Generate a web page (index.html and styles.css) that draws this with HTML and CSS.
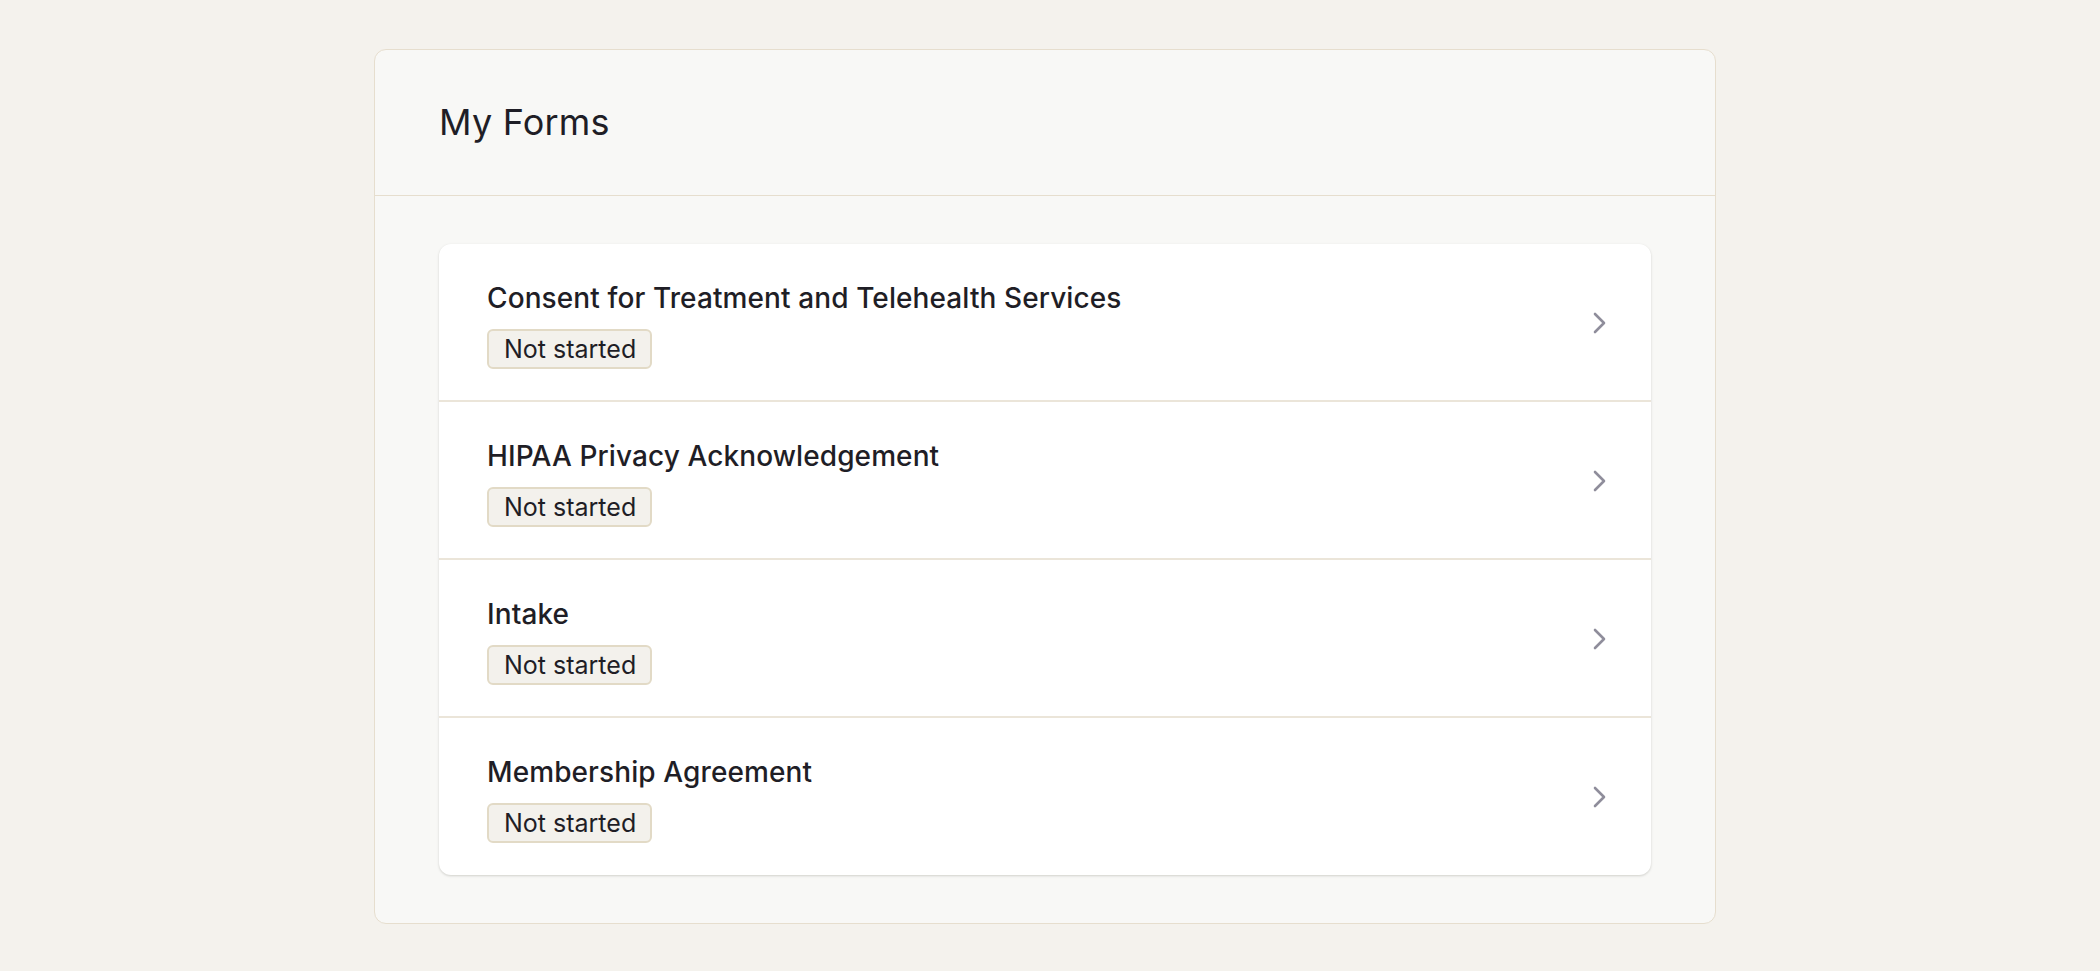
FILE: index.html
```html
<!DOCTYPE html>
<html lang="en">
<head>
<meta charset="utf-8">
<title>My Forms</title>
<link rel="stylesheet" href="styles.css">
</head>
<body>
<main class="page">
  <section class="forms-card">
    <header class="forms-header">
      <h1 class="forms-title">My Forms</h1>
    </header>
    <div class="forms-body">
      <ul class="form-list">
        <li class="form-row">
          <div class="form-info">
            <span class="form-name">Consent for Treatment and Telehealth Services</span>
            <span class="status-badge">Not started</span>
          </div>
          <svg class="chevron" viewBox="0 0 14 24" width="14" height="24" aria-hidden="true"><polyline points="3,3 12,12 3,21"/></svg>
        </li>
        <li class="form-row">
          <div class="form-info">
            <span class="form-name">HIPAA Privacy Acknowledgement</span>
            <span class="status-badge">Not started</span>
          </div>
          <svg class="chevron" viewBox="0 0 14 24" width="14" height="24" aria-hidden="true"><polyline points="3,3 12,12 3,21"/></svg>
        </li>
        <li class="form-row">
          <div class="form-info">
            <span class="form-name">Intake</span>
            <span class="status-badge">Not started</span>
          </div>
          <svg class="chevron" viewBox="0 0 14 24" width="14" height="24" aria-hidden="true"><polyline points="3,3 12,12 3,21"/></svg>
        </li>
        <li class="form-row">
          <div class="form-info">
            <span class="form-name">Membership Agreement</span>
            <span class="status-badge">Not started</span>
          </div>
          <svg class="chevron" viewBox="0 0 14 24" width="14" height="24" aria-hidden="true"><polyline points="3,3 12,12 3,21"/></svg>
        </li>
      </ul>
    </div>
  </section>
</main>
</body>
</html>
```
FILE: styles.css
```css
* { box-sizing: border-box; }

html, body {
  margin: 0;
  padding: 0;
  background: #f4f2ed;
  color: #1f1e26;
  font-family: Inter, "Noto Sans", sans-serif;
}

.page {
  padding: 49px 10px 48px 0;
}

.forms-card {
  width: 1342px;
  margin: 0 auto;
  background: #f8f8f6;
  border: 1px solid #e6dece;
  border-radius: 12px;
}

.forms-header {
  height: 146px;
  display: flex;
  align-items: center;
  padding: 0 64px 2px;
  border-bottom: 1px solid #e6dece;
}

.forms-title {
  margin: 0;
  font-size: 36px;
  font-weight: 400;
  line-height: 54px;
  letter-spacing: 0.2px;
}

.forms-body {
  padding: 48px 64px;
}

.form-list {
  list-style: none;
  margin: 0;
  padding: 0;
  background: #ffffff;
  border-radius: 12px;
  box-shadow: 0 1px 3px rgba(40, 35, 25, 0.13), 0 1px 2px rgba(40, 35, 25, 0.06);
}

.form-row {
  display: flex;
  align-items: center;
  padding: 34px 45px 31px 48px;
  border-bottom: 2px solid #ebe5d9;
}

.form-row:last-child {
  border-bottom: none;
  padding-bottom: 32px;
}

.form-info {
  flex: 1;
  display: flex;
  flex-direction: column;
  align-items: flex-start;
  gap: 11px;
}

.form-name {
  font-size: 28px;
  font-weight: 500;
  line-height: 40px;
  letter-spacing: 0.1px;
}

.status-badge {
  display: inline-flex;
  align-items: center;
  height: 40px;
  padding: 0 14px 0 15px;
  font-size: 25px;
  font-weight: 400;
  background: #f3f1ec;
  border: 2px solid #e2dac6;
  border-radius: 6px;
}

.chevron {
  flex: none;
  margin-bottom: 2px;
  fill: none;
  stroke: #8f8d9b;
  stroke-width: 2.6;
  stroke-linecap: round;
  stroke-linejoin: round;
}
```
